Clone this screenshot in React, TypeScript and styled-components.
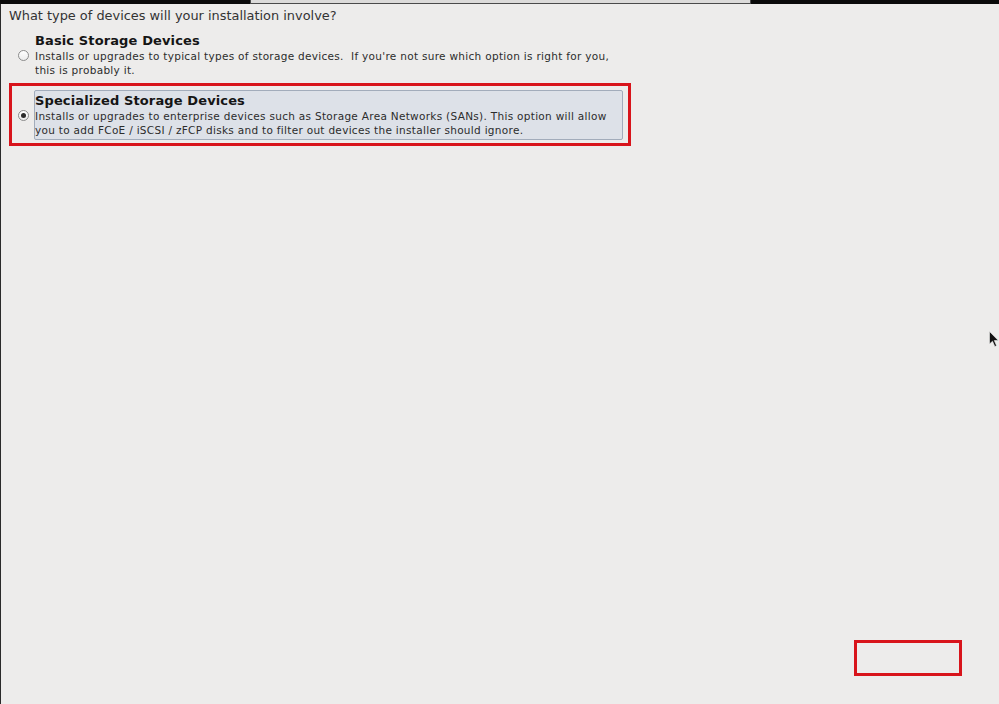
import styled, { createGlobalStyle } from "styled-components";

const GlobalStyle = createGlobalStyle`
	html, body {
		margin: 0;
		padding: 0;
		background: #000;
	}
	body {
		font-family: "DejaVu Sans", "Liberation Sans", sans-serif;
	}
`;

const Screen = styled.div`
	position: relative;
	width: 999px;
	height: 704px;
	display: flex;
	flex-direction: column;
	background: #edeceb;
	overflow: hidden;
`;

const TopStrip = styled.div`
	display: flex;
	height: 4px;
	flex-shrink: 0;
`;

const StripBlack = styled.div<{ $w?: number }>`
	width: ${(p) => (p.$w ? `${p.$w}px` : "auto")};
	flex: ${(p) => (p.$w ? "none" : "1")};
	background: #0a0a0a;
`;

const StripTab = styled.div`
	width: 501px;
	background: #dcdbda;
	border-bottom: 1px solid #4a4a4a;
	border-left: 1px solid #4a4a4a;
	border-right: 1px solid #4a4a4a;
	box-sizing: border-box;
`;

const Body = styled.div`
	flex: 1;
	border-left: 1px solid #2a2a2a;
	padding: 4px 0 0 8px;
`;

const Question = styled.div`
	font-size: 12.9px;
	line-height: 16px;
	color: #333333;
`;

const Options = styled.div`
	display: flex;
	flex-direction: column;
	width: 622px;
`;

const OptionFrame = styled.div<{ $marked?: boolean }>`
	display: flex;
	align-items: center;
	gap: 5px;
	padding: ${(p) => (p.$marked ? "4px 5px 3px 6px" : "3px 5px 0 6px")};
	border: 3px solid ${(p) => (p.$marked ? "#d8141b" : "transparent")};
`;

const Radio = styled.span<{ $checked?: boolean }>`
	position: relative;
	flex: none;
	width: 11px;
	height: 11px;
	border-radius: 50%;
	box-sizing: border-box;
	border: 1px solid #8c8c8c;
	background: linear-gradient(#ffffff, #ececec);

	&::after {
		content: "";
		display: ${(p) => (p.$checked ? "block" : "none")};
		position: absolute;
		left: 2px;
		top: 2px;
		width: 5px;
		height: 5px;
		border-radius: 50%;
		background: #2b2b2b;
	}
`;

const OptionBox = styled.div<{ $selected?: boolean }>`
	flex: 1;
	padding: 2px 1px 2px 0;
	border: 1px solid ${(p) => (p.$selected ? "#a2acbb" : "transparent")};
	border-radius: 2px;
	background: ${(p) => (p.$selected ? "#dde1e8" : "transparent")};
`;

const OptionTitle = styled.div`
	font-size: 13px;
	font-weight: bold;
	line-height: 16px;
	letter-spacing: 0.12px;
	color: #151515;
`;

const OptionText = styled.div`
	font-size: 10.5px;
	line-height: 14px;
	letter-spacing: 0.3px;
	color: #2c2c2c;
	white-space: pre;
`;

const Annotation = styled.div`
	position: absolute;
	left: 854px;
	top: 640px;
	width: 108px;
	height: 36px;
	box-sizing: border-box;
	border: 3px solid #d8141b;
`;

const Pointer = styled.svg`
	position: absolute;
	left: 989px;
	top: 331px;
`;

type StorageOption = {
	title: string;
	lines: string[];
	selected?: boolean;
};

const options: StorageOption[] = [
	{
		title: "Basic Storage Devices",
		lines: [
			"Installs or upgrades to typical types of storage devices.  If you're not sure which option is right for you,",
			"this is probably it.",
		],
	},
	{
		title: "Specialized Storage Devices",
		lines: [
			"Installs or upgrades to enterprise devices such as Storage Area Networks (SANs). This option will allow",
			"you to add FCoE / iSCSI / zFCP disks and to filter out devices the installer should ignore.",
		],
		selected: true,
	},
];

const App = () => {
	return (
		<Screen>
			<GlobalStyle />
			<TopStrip>
				<StripBlack $w={250} />
				<StripTab />
				<StripBlack />
			</TopStrip>
			<Body>
				<Question>What type of devices will your installation involve?</Question>
				<Options>
					{options.map((opt) => (
						<OptionFrame key={opt.title} $marked={opt.selected}>
							<Radio $checked={opt.selected} />
							<OptionBox $selected={opt.selected}>
								<OptionTitle>{opt.title}</OptionTitle>
								{opt.lines.map((line) => (
									<OptionText key={line}>{line}</OptionText>
								))}
							</OptionBox>
						</OptionFrame>
					))}
				</Options>
			</Body>
			<Annotation />
			<Pointer width="10" height="17" viewBox="0 0 10 17">
				<path d="M0.5 0.5 L0.5 13 L3.5 10.2 L5.8 15.5 L7.6 14.7 L5.3 9.5 L9.3 9.5 Z" fill="#111" stroke="#eee" strokeWidth="0.6" />
			</Pointer>
		</Screen>
	);
};

export default App;
